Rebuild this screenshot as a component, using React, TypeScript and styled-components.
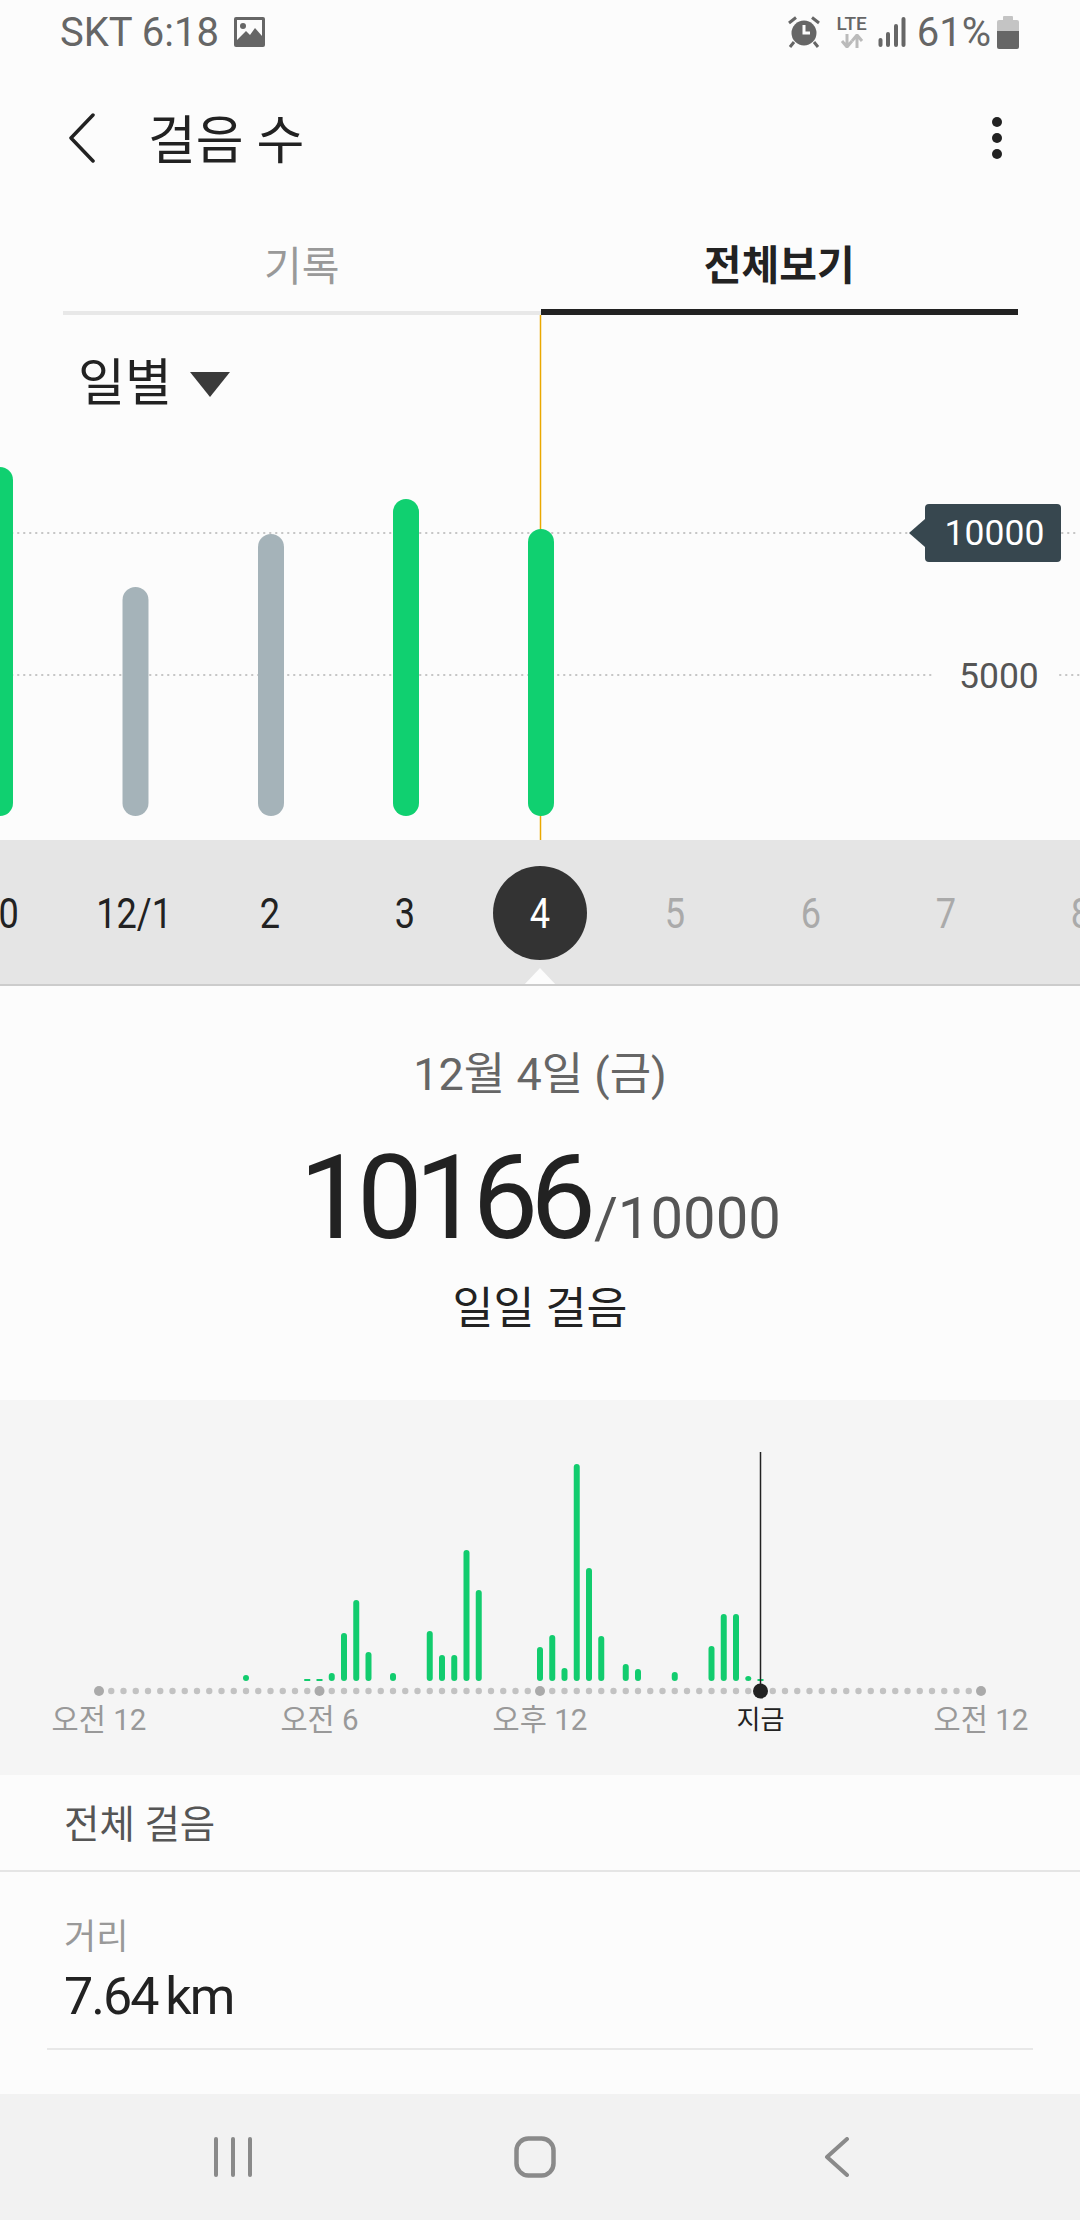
import styled, { createGlobalStyle } from "styled-components";

const GlobalStyle = createGlobalStyle`
  html, body {
    margin: 0;
    padding: 0;
    background: #fcfcfc;
  }
  * {
    box-sizing: border-box;
  }
`;

const FONT = `Roboto, "Noto Sans CJK KR", sans-serif`;

// top chart data
const dayBars = [
  { x: 0, top: 467, on: true },
  { x: 135.5, top: 587, on: false },
  { x: 271, top: 534, on: false },
  { x: 406, top: 499, on: true },
  { x: 541, top: 529, on: true },
];
const days = ["30", "12/1", "2", "3", "4", "5", "6", "7", "8"];

// hourly chart: [dot index, bar height]
const hourBars = [
  [12, 6], [17, 2], [18, 2], [19, 8], [20, 48], [21, 81], [22, 29], [24, 8],
  [27, 50], [28, 26], [29, 26], [30, 131], [31, 91], [36, 34], [37, 46], [38, 13],
  [39, 217], [40, 113], [41, 45], [43, 17], [44, 12], [47, 9], [50, 35], [51, 67],
  [52, 67], [53, 5], [54, 2],
];
const dotX = (i: number) => 99 + i * 12.25;
const hourLabels = [
  { i: 0, text: "오전 12" },
  { i: 18, text: "오전 6" },
  { i: 36, text: "오후 12" },
  { i: 72, text: "오전 12" },
];

const App = () => (
  <Screen>
    <GlobalStyle />
    <StatusBar>
      <CarrierGroup>
        <StatusText>SKT 6:18</StatusText>
        <svg width="31" height="30" viewBox="0 0 31 30">
          <rect width="31" height="30" rx="2" fill="#666" />
          <rect x="3" y="3" width="25" height="24" fill="#fcfcfc" />
          <circle cx="9" cy="9" r="3" fill="#666" />
          <path d="M3 27 L3 23 L12 14 L16 18 L21 11 L28 19 L28 27 Z" fill="#666" />
        </svg>
      </CarrierGroup>
      <StatusGroup>
        <AlarmSlot>
          <svg width="34" height="32" viewBox="0 0 34 32">
            <circle cx="17" cy="17" r="12.5" fill="#666" />
            <path d="M17 9 V17 H23" fill="none" stroke="#fcfcfc" strokeWidth="3" />
            <path d="M2 7 L9 1.5 M32 7 L25 1.5 M7 26 L3 31 M27 26 L31 31" stroke="#666" strokeWidth="3" fill="none" />
          </svg>
        </AlarmSlot>
        <NetworkIcon>
          <LteText>LTE</LteText>
          <svg width="24" height="14" viewBox="0 0 24 14">
            <path d="M7 0 V12 M2 7 L7 13 L12 7" stroke="#bbb" strokeWidth="3" fill="none" />
            <path d="M17 14 V2 M12 7 L17 1 L22 7" stroke="#bbb" strokeWidth="3" fill="none" />
          </svg>
        </NetworkIcon>
        <svg width="28" height="30" viewBox="0 0 28 30">
          <g stroke="#666" strokeWidth="4" strokeLinecap="round">
            <path d="M2.5 23 V28" />
            <path d="M10 17 V28" />
            <path d="M18 9 V28" />
            <path d="M25.5 2 V28" />
          </g>
        </svg>
        <PercentText>61%</PercentText>
        <svg width="22" height="33" viewBox="0 0 22 33">
          <rect x="6" y="0" width="10" height="5" rx="1" fill="#c4c4c4" />
          <path d="M2 4 H20 A2 2 0 0 1 22 6 V15 H0 V6 A2 2 0 0 1 2 4 Z" fill="#c4c4c4" />
          <path d="M0 15 H22 V31 A2 2 0 0 1 20 33 H2 A2 2 0 0 1 0 31 Z" fill="#666" />
        </svg>
      </StatusGroup>
    </StatusBar>

    <Header>
      <HeaderLeft>
        <svg width="28" height="50" viewBox="0 0 28 50">
          <path d="M25 2 L3 25 L25 48" fill="none" stroke="#222" strokeWidth="3.5" strokeLinecap="round" strokeLinejoin="round" />
        </svg>
        <Title>걸음 수</Title>
      </HeaderLeft>
      <MoreDots>
        <Dot />
        <Dot />
        <Dot />
      </MoreDots>
    </Header>

    <Tabs>
      <Tab>기록</Tab>
      <Tab $active>전체보기</Tab>
    </Tabs>

    <ChartArea>
      <svg width="1080" height="525" viewBox="0 315 1080 525">
        <line x1="540.5" y1="315" x2="540.5" y2="840" stroke="#eaa800" strokeWidth="1.5" />
        <line x1="0" y1="533" x2="1080" y2="533" stroke="#c4c4c4" strokeWidth="2" strokeDasharray="0.5 5.5" strokeLinecap="round" />
        <line x1="0" y1="675" x2="934" y2="675" stroke="#c4c4c4" strokeWidth="2" strokeDasharray="0.5 5.5" strokeLinecap="round" />
        <line x1="1060" y1="675" x2="1080" y2="675" stroke="#c4c4c4" strokeWidth="2" strokeDasharray="0.5 5.5" strokeLinecap="round" />
        {dayBars.map((b) => (
          <rect
            key={b.x}
            x={b.x - 13}
            y={b.top}
            width="26"
            height={816 - b.top}
            rx="13"
            fill={b.on ? "#10d070" : "#a5b3b9"}
          />
        ))}
      </svg>
      <PeriodFilter>
        일별
        <svg width="40" height="25" viewBox="0 0 40 25">
          <path d="M0 0 H40 L20 25 Z" fill="#3a3a3a" />
        </svg>
      </PeriodFilter>
      <GoalTag>10000</GoalTag>
      <AxisLabel>5000</AxisLabel>
    </ChartArea>

    <DateStrip>
      {days.map((d) => (
        <DayItem key={d} $state={d === "4" ? "current" : ["5", "6", "7", "8"].includes(d) ? "future" : "past"}>
          <DayNumber>{d}</DayNumber>
        </DayItem>
      ))}
      <StripNotch />
    </DateStrip>

    <Summary>
      <DateLabel>12월 4일 (금)</DateLabel>
      <CountRow>
        <CountValue>10166</CountValue>
        <CountGoal>/10000</CountGoal>
      </CountRow>
      <CountCaption>일일 걸음</CountCaption>
    </Summary>

    <HourPanel>
      <svg width="1080" height="375" viewBox="0 1400 1080 375">
        {Array.from({ length: 73 }, (_, i) => (
          <circle
            key={i}
            cx={dotX(i)}
            cy="1691"
            r={i % 18 === 0 ? 5 : 3.2}
            fill={i % 18 === 0 ? "#aaa" : "#c2c2c2"}
          />
        ))}
        {hourBars.map(([i, h]) => (
          <rect key={i} x={dotX(i) - 3} y={1681 - h} width="6" height={h} rx={h > 4 ? 3 : 0} fill="#12cc6e" />
        ))}
        <line x1="760.5" y1="1452" x2="760.5" y2="1691" stroke="#222" strokeWidth="1.5" />
        <circle cx="760.5" cy="1691" r="7.5" fill="#222" />
        {hourLabels.map((l) => (
          <HourText key={l.i} x={dotX(l.i)} y="1730" textAnchor="middle">
            {l.text}
          </HourText>
        ))}
        <NowText x="760.5" y="1729" textAnchor="middle">
          지금
        </NowText>
      </svg>
    </HourPanel>

    <SectionRow>전체 걸음</SectionRow>

    <DetailBlock>
      <DetailLabel>거리</DetailLabel>
      <DetailValue>7.64 km</DetailValue>
      <DetailRule />
    </DetailBlock>

    <NavBar>
      <NavSlot>
        <svg width="38" height="40" viewBox="0 0 38 40">
          <g stroke="#8a8a8a" strokeWidth="4" strokeLinecap="round">
            <path d="M2 2 V38" />
            <path d="M19 2 V38" />
            <path d="M36 2 V38" />
          </g>
        </svg>
      </NavSlot>
      <NavSlot>
        <svg width="42" height="42" viewBox="0 0 42 42">
          <rect x="2.5" y="2.5" width="37" height="37" rx="12" fill="none" stroke="#8a8a8a" strokeWidth="4.5" />
        </svg>
      </NavSlot>
      <NavSlot>
        <svg width="26" height="40" viewBox="0 0 26 40">
          <path d="M23 2 L3 20 L23 38" fill="none" stroke="#8a8a8a" strokeWidth="4" strokeLinecap="round" strokeLinejoin="round" />
        </svg>
      </NavSlot>
    </NavBar>
  </Screen>
);

export default App;

const Screen = styled.div`
  width: 1080px;
  height: 2220px;
  overflow: hidden;
  background: #fcfcfc;
  font-family: ${FONT};
  display: flex;
  flex-direction: column;
`;

const StatusBar = styled.div`
  height: 64px;
  padding: 0 61px 0 60px;
  display: flex;
  align-items: center;
  justify-content: space-between;
`;

const StatusGroup = styled.div`
  display: flex;
  align-items: center;
  gap: 11px;
`;

const CarrierGroup = styled(StatusGroup)`
  gap: 15px;
`;

const StatusText = styled.span`
  font-size: 40px;
  color: #666;
`;

const PercentText = styled(StatusText)`
  margin: 0 -5px 0 0;
`;

const AlarmSlot = styled.div`
  display: flex;
  margin-right: 4px;
`;

const NetworkIcon = styled.div`
  display: flex;
  flex-direction: column;
  align-items: center;
  gap: 2px;
`;

const LteText = styled.span`
  font-size: 19px;
  line-height: 16px;
  font-weight: 500;
  color: #666;
`;

const Header = styled.div`
  height: 148px;
  padding: 0 68px;
  display: flex;
  align-items: center;
  justify-content: space-between;
`;

const HeaderLeft = styled.div`
  display: flex;
  align-items: center;
  gap: 52px;
`;

const Title = styled.h1`
  margin: -4px 0 0;
  font-size: 52px;
  font-weight: 400;
  color: #222;
`;

const MoreDots = styled.div`
  display: flex;
  flex-direction: column;
  gap: 6px;
  margin-right: 10px;
`;

const Dot = styled.span`
  width: 10px;
  height: 10px;
  border-radius: 50%;
  background: #222;
`;

const Tabs = styled.div`
  height: 103px;
  margin: 0 62px 0 63px;
  display: flex;
`;

const Tab = styled.div<{ $active?: boolean }>`
  flex: 1;
  display: flex;
  align-items: center;
  justify-content: center;
  padding-top: 2px;
  font-size: 41px;
  font-weight: ${(p) => (p.$active ? 700 : 400)};
  color: ${(p) => (p.$active ? "#222" : "#999")};
  border-bottom: ${(p) => (p.$active ? "6px solid #222" : "4px solid #e8e8e8")};
`;

const ChartArea = styled.div`
  position: relative;
  height: 525px;

  svg {
    display: block;
  }
`;

const PeriodFilter = styled.div`
  position: absolute;
  left: 78px;
  top: 34px;
  display: flex;
  align-items: center;
  gap: 18px;
  font-size: 51px;
  line-height: 70px;
  color: #222;
`;

const GoalTag = styled.div`
  position: absolute;
  left: 925px;
  top: 189px;
  width: 136px;
  height: 58px;
  padding-left: 3px;
  display: flex;
  align-items: center;
  justify-content: center;
  border-radius: 4px;
  background: #37474f;
  color: #fff;
  font-size: 35.5px;

  &::before {
    content: "";
    position: absolute;
    left: -16px;
    top: 15px;
    border-style: solid;
    border-width: 14px 16px 14px 0;
    border-color: transparent #37474f transparent transparent;
  }
`;

const AxisLabel = styled.div`
  position: absolute;
  left: 959px;
  top: 340px;
  font-size: 35.5px;
  line-height: 42px;
  color: #555;
`;

const DateStrip = styled.div`
  position: relative;
  height: 146px;
  display: flex;
  align-items: center;
  justify-content: center;
  overflow: hidden;
  background: #e5e5e5;
  border-bottom: 2px solid #ccc;
`;

const dayColors = { past: "#222", current: "#fff", future: "#aaa" };

const DayItem = styled.div<{ $state: "past" | "current" | "future" }>`
  flex: 0 0 135.3px;
  display: flex;
  align-items: center;
  justify-content: center;
  height: 94px;
  margin-top: 2px;
  color: ${(p) => dayColors[p.$state]};

  ${(p) =>
    p.$state === "current" &&
    `
    flex: 0 0 94px;
    margin: 2px 20.65px 0;
    border-radius: 50%;
    background: #333;
  `}
`;

const DayNumber = styled.span`
  display: inline-block;
  font-size: 42px;
  transform: scaleX(0.86);
`;

const StripNotch = styled.div`
  position: absolute;
  left: 523px;
  bottom: -2px;
  border-style: solid;
  border-width: 0 17px 18px;
  border-color: transparent transparent #fcfcfc;
`;

const Summary = styled.div`
  height: 414px;
  padding-top: 57px;
  display: flex;
  flex-direction: column;
  align-items: center;
`;

const DateLabel = styled.div`
  font-size: 45px;
  line-height: 64px;
  color: #666;
`;

const CountRow = styled.div`
  margin-top: 26px;
  display: flex;
  align-items: baseline;
  height: 130px;
`;

const CountValue = styled.span`
  font-size: 117px;
  line-height: 130px;
  color: #222;
  letter-spacing: -8px;
  margin-right: 6px;
`;

const CountGoal = styled.span`
  font-size: 58px;
  color: #555;
`;

const CountCaption = styled.div`
  margin-top: 14px;
  font-size: 44.5px;
  line-height: 64px;
  color: #222;
`;

const HourPanel = styled.div`
  height: 375px;
  background: #f5f5f5;

  svg {
    display: block;
  }
`;

const HourText = styled.text`
  font-family: ${FONT};
  font-size: 29.5px;
  fill: #999;
`;

const NowText = styled.text`
  font-family: ${FONT};
  font-size: 26px;
  fill: #222;
`;

const SectionRow = styled.div`
  height: 97px;
  padding: 0 64px 4px;
  display: flex;
  align-items: center;
  font-size: 38.5px;
  color: #555;
  border-bottom: 2px solid #e5e5e5;
`;

const DetailBlock = styled.div`
  height: 222px;
  padding-top: 42px;
`;

const DetailLabel = styled.div`
  margin: 0 64px;
  font-size: 35px;
  line-height: 48px;
  color: #999;
`;

const DetailValue = styled.div`
  margin: 4px 64px 0;
  font-size: 52px;
  line-height: 62px;
  color: #222;
  letter-spacing: -2px;
  word-spacing: -3px;
`;

const DetailRule = styled.div`
  height: 2px;
  margin: 20px 47px 0;
  background: #e8e8e8;
`;

const NavBar = styled.div`
  height: 126px;
  padding: 0 10px 1px 0;
  display: flex;
  align-items: center;
  justify-content: center;
  background: #f2f2f2;
`;

const NavSlot = styled.div`
  flex: 0 0 302px;
  display: flex;
  justify-content: center;
`;
